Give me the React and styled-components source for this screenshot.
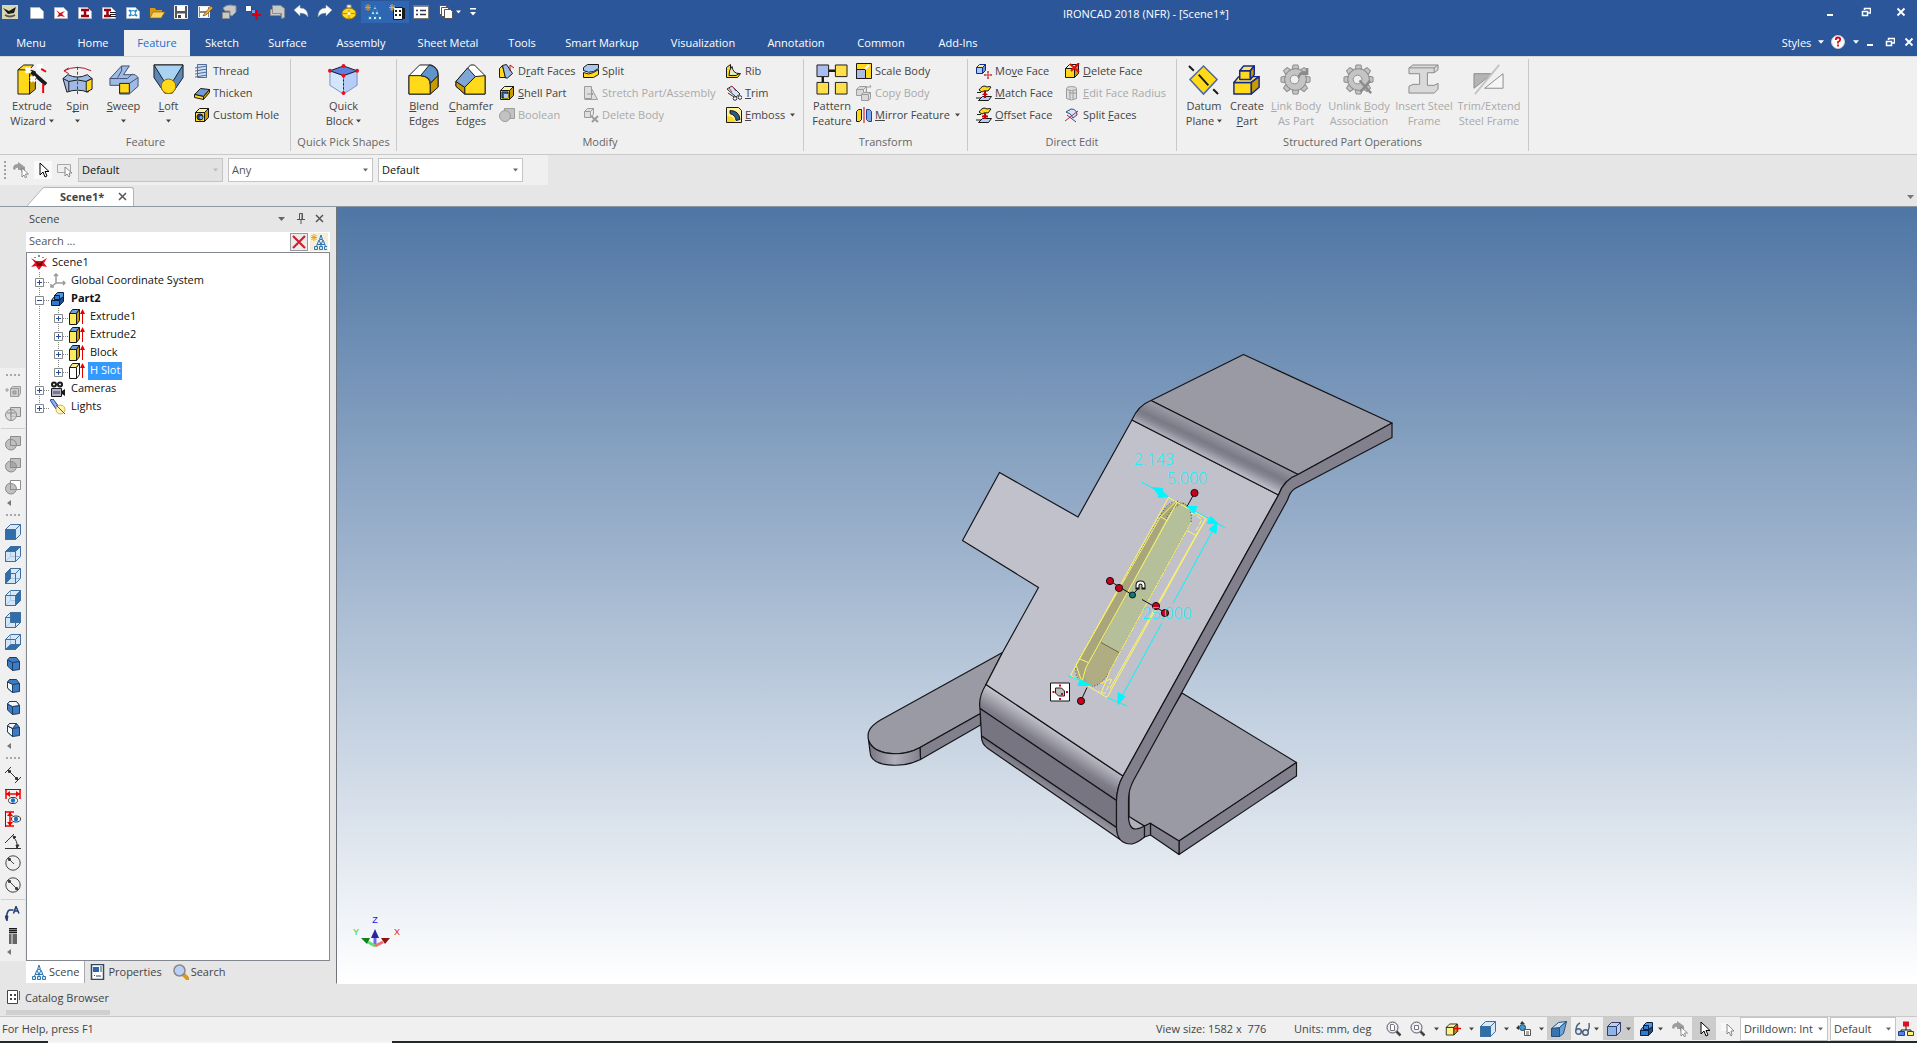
import React from 'react';
import styled, { createGlobalStyle, css, ThemeProvider } from 'styled-components';

const theme = {
	colorPrimary: '#2b579a',
	colorRibbon: '#f0f0f0',
	colorShell: '#e6e6e6',
	colorLine: '#c9c9c9',
	colorText: '#444444',
	colorMuted: '#a9a9a9',
	colorWhite: '#ffffff'
};

const GlobalStyle = createGlobalStyle`
	* {
		box-sizing: border-box;
	}
	body {
		margin: 0;
		font-family: "Open Sans", "Noto Sans", sans-serif;
		font-size: 11px;
		line-height: 15px;
		color: #444;
	}
	button, input, select {
		font: inherit;
		color: inherit;
		margin: 0;
		padding: 0;
		border: 0;
		background: none;
	}
	svg {
		display: block;
		flex: none;
	}
	u {
		text-decoration: underline 1px;
		text-decoration-skip-ink: none;
		text-underline-offset: 1px;
	}
`;

/* ---------- icons ---------- */

const K = '#1a1a1a';
const Y = '#ffd91a';
const YD = '#c89b00';
const YL = '#fff3a0';
const B = '#9fbbe4';
const BL = '#d5e4f8';
const BD = '#2f6ea8';
const GD = '#9c9c9c';

const Cube = ({ f = Y, t = YL, s = YD, k = K }) => (
	<g stroke={k} strokeLinejoin="round">
		<path d="M1.500 5.500h9v9h-9z" fill={f} />
		<path d="M1.500 5.500l4-4h9l-4 4z" fill={t} />
		<path d="M10.500 5.500l4-4v9l-4 4z" fill={s} />
	</g>
);

const faces = {
	front: 'M.5 5.5h10v10H.5z',
	back: 'M5.5 .5h10v10h-10z',
	top: 'M.5 5.5l5-5h10l-5 5z',
	bottom: 'M.5 15.5l5-5h10l-5 5z',
	left: 'M.5 5.5l5-5v10l-5 5z',
	right: 'M10.5 5.5l5-5v10l-5 5z'
};

const ViewCube = ({ face }) => (
	<g stroke="#3f6f9f" strokeLinejoin="round">
		<path d="M.5 5.5l5-5h10v10l-5 5h-10z" fill="#d9e8f7" />
		{face !== 'front' && <path d="M5.5 .5v10h10M5.5 10.5l-5 5" fill="none" stroke="#8fb0d4" />}
		<path d="M.5 5.5h10v10H.5zM10.5 5.5l5-5" fill="#cfe1f4" fillOpacity=".5" />
		<path d={faces[face]} fill={BD} />
	</g>
);

const IsoCube = ({ open }) => (
	<g stroke="#1d3c63" strokeLinejoin="round">
		<path d="M2.500 4l2-2.500h7l3 4v8l-7 1-5-4.500z" fill="#3d7cc4" />
		<path d="M2.500 4l5 2.500 7-1M7.500 6.500v8" fill="none" />
		{open === 1 && <path d="M2.500 4l5 2.500v8l-5-4.500z" fill="#f4f8fc" />}
		{open === 2 && <path d="M2.500 4l2-2.500h7l3 4-7 1z" fill="#f4f8fc" />}
		{open === 3 && <path d="M2.500 4l5 2.500v8l-5-4.500zM4.500 1.500h7l-4 5-5-2.500z" fill="#f4f8fc" />}
	</g>
);

const Gear = ({ children }) => (
	<g>
		<g stroke="#8b8b8b" fill="#c4c4c4">
			{[ 0, 45, 90, 135, 180, 225, 270, 315 ].map((a) => (
				<path key={a} d="M12.500 5l1-4h5l1 4z" transform={`rotate(${a} 16 16)`} />
			))}
			<circle cx="16" cy="16" r="11" />
		</g>
		<circle cx="16" cy="16" r="10.300" fill="#c4c4c4" />
		<circle cx="15" cy="16" r="4.500" fill="#f0f0f0" stroke="#8b8b8b" />
		{children}
	</g>
);

const Page = <path d="M1.500 3.500h9l4 4v7h-13z" fill="#fff" stroke="#aab4c4" />;
const CursorPath = 'M5 1v12l3-3 2 5 2-1-2-4.500h4z';

const Extrusion = ({ f, t, s }) => (
	<g>
		<g stroke={K} strokeLinejoin="round">
			<path d="M.5 4.500h7v11h-7z" fill={f} />
			<path d="M.5 4.500l3-4h7l-3 4z" fill={t} />
			<path d="M7.500 4.500l3-4v11l-3 4z" fill={s} />
		</g>
		<path d="M13.500 15V3" stroke="#e00000" />
		<path d="M11 5l2.500-5L16 5z" fill="#e00000" />
	</g>
);

const Assembly = ({ star }) => (
	<g transform={star ? 'translate(2 0)' : undefined}>
		<g fill="#cfe6f8" stroke="#2f78b4">
			<path d="M6.500 5.500L8 1l1.500 4.500zM4 10.500l2-4.500 2 4.500zM8 10.500L10 6l2 4.500z" />
			<path d="M4 11l-1 2M12 11l1 2M8 11v2" fill="none" />
			<path d="M1.500 12.500h3v3h-3zM6.500 12.500h3v3h-3zM11.500 12.500h3v3h-3z" />
		</g>
		{star && <path d="M1 0v7M-2 3.500h6M-1.500 1l5 5M3.500 1l-5 5" stroke="#e8a010" />}
	</g>
);

const Eye = ({ x, y }) => (
	<g>
		<ellipse cx={x} cy={y} rx="4.500" ry="3" fill="#fff" stroke="#333" />
		<circle cx={x} cy={y} r="2.200" fill="#1673d0" />
	</g>
);

const FaceStack = ({ offset }) => (
	<g stroke={K} strokeLinejoin="round">
		<path d="M2.500 15.500l4-4h9l-3 4z" fill="#b8cdf0" />
		<path d="M3 5q4-6 8-3 2-1 4 0l-3 4q-4-1-6 1z" fill={Y} />
		<path d="M1 7.500h4M0 13h5" />
		<path d={offset ? 'M9 6v6M6 9.500h6' : 'M9 6v7'} stroke="#c80010" strokeWidth="2" />
		<path d="M6 10l3-3 3 3z" fill="#c80010" stroke="none" />
	</g>
);

const icons = {
	app: (
		<g>
			<path d="M0 1h16v14H0z" fill="#d8d6b0" />
			<path d="M1 4l6 3 7-4-2 6-6 1z" fill={K} />
			<path d="M3 11q5 3 10 0" stroke="#555" strokeWidth="2" fill="none" />
		</g>
	),
	pageNew: Page,
	pageScene: <g>{Page}<path d="M3 6l4 3 5-2-3 3 3 3-4-1-4 1 2-3z" fill="#d01020" /></g>,
	pageI: <g>{Page}<path d="M4 6h8M4 12h8M8 6v6" stroke="#a00010" strokeWidth="2.500" /></g>,
	pageIList: <g>{Page}<path d="M3 6h7M3 12h7M6.500 6v6" stroke="#a00010" strokeWidth="2.500" /><path d="M9 8.500h6M9 10.500h6M9 12.500h6" stroke={K} /></g>,
	pageTarget: <g>{Page}<path d="M4 6l8 6M12 6l-8 6" stroke="#1c8ad0" strokeWidth="2" /><circle cx="8" cy="9" r="2.500" fill="#fff" stroke="#1c8ad0" /></g>,
	open: <g><path d="M1 4h5l1 2h6v8H1z" fill="#d79a18" /><path d="M1 14l3-6h12l-4 6z" fill="#ffd25c" stroke="#7a5a10" strokeWidth=".6" /></g>,
	save: <g><path d="M1.500 1.500h13v13h-13z" fill="#555" stroke="#eee" /><path d="M4 2h8v5H4zM4 9.500h8V14H4z" fill="#fff" /><path d="M5 11h3v3H5z" fill="#444" /></g>,
	saveAs: <g><path d="M1.500 2.500h11v11h-11z" fill="#888" stroke="#eee" /><path d="M3 3h8v4H3zM3 9h8v4H3z" fill="#fff" /><path d="M7 10l7-8 2 2-7 7-3 1z" fill="#f2a93b" stroke="#704000" strokeWidth=".6" /></g>,
	link: <g fill="#c9c9c9" stroke="#8c8c8c"><path d="M1.500 8.500h7v6h-7z" /><path d="M2 4q3-3 7-3l6 1v6l-4 4-2-1V7H4z" /></g>,
	moveBox: <g><path d="M.5 1.500h6v6h-6z" fill="#fff" stroke="#1b4bb0" /><path d="M6.500 5.500h4v4h-4z" fill="#6fa0e0" stroke="#1b4bb0" /><path d="M11.500 6v10M7 11h9" stroke="#d00010" strokeWidth="2" /></g>,
	print: <g fill="#c9c9c9" stroke="#8c8c8c"><path d="M1.500 5.500h10v6h-10z" /><path d="M3.500 1.500h8l4 3v9l-3 1v-5h-9z" /></g>,
	undo: <path d="M1 6l6-5v3q8 0 8 9-2-4-8-4v3z" fill="#fff" stroke="#9aa" strokeWidth=".5" />,
	redo: <path d="M15 6L9 1v3q-8 0-8 9 2-4 8-4v3z" fill="#fff" stroke="#9aa" strokeWidth=".5" />,
	target: <g><path d="M6 1h4v3H6z" fill="#fff" stroke="#997" /><ellipse cx="8" cy="9.500" rx="7" ry="5.500" fill={Y} stroke="#9a7a10" /><path d="M2 9.500h12M8 6v8" stroke="#c48a00" /><circle cx="8" cy="9.500" r="1.500" fill="#fff" /></g>,
	asmStar: <Assembly star />,
	asm: <Assembly />,
	catalogStar: <g><path d="M4.500 3.500h9v12h-9z" fill="#fff" stroke={K} /><path d="M6 6h2v2H6zM10 6h2v2h-2zM6 10h2v2H6zM10 10h2v2h-2z" fill={K} /><path d="M15 4v11" stroke={K} strokeWidth="2" /><path d="M3 0v7M0 3.500h6M1 1l4.500 5M5.500 1L1 6" stroke="#f0b020" /></g>,
	list: <g><path d="M.5 1.500h15v13H.5z" fill="#fff" stroke="#777" /><path d="M3 6.500h2M3 10.500h2M7 6.500h6M7 10.500h6" stroke="#334" strokeWidth="1.500" /><path d="M1 2.500h14" stroke="#889" /></g>,
	copies: <g fill="#fff" stroke="#555"><path d="M1.500 1.500h7v9h-7z" /><path d="M3.500 3.500h7v9h-7z" /><path d="M6.500 5.500h6l2 2v7h-8z" /></g>,
	help: <g><circle cx="8" cy="8" r="6.500" fill="#fff" stroke="#ccc" /><path d="M5.800 6q0-2.500 2.200-2.500t2.200 2q0 1.500-2.200 2.500v1.500M8 10.500v2" fill="none" stroke="#e00010" strokeWidth="1.800" /></g>,
	thread: <g><path d="M3.500 1.500h9v13h-9z" fill="#cfe0f6" stroke="#4f6a94" /><path d="M1 5l12-2M1 8l12-2M1 11l12-2M1 14l12-2" stroke="#4f6a94" /></g>,
	thicken: <g stroke={K} strokeLinejoin="round"><path d="M.5 9.500l6-6 9 1-6 7z" fill="#6f9ad4" /><path d="M.5 9.500l9 2v3l-9-2z" fill={Y} /><path d="M9.500 11.500l6-7v3l-6 7z" fill={YD} /></g>,
	hole: <g><Cube /><circle cx="6" cy="10" r="3" fill="#1f3f74" stroke={K} /><circle cx="7" cy="10.500" r="1.500" fill="#7fb0e8" /></g>,
	draft: <g stroke={K} strokeLinejoin="round"><path d="M.5 5.500l3-3 3 12h-6z" fill={Y} /><path d="M3.500 2.500l4-1 6 9-5 4.500h-2z" fill="#9fbbe4" /><path d="M11 8V2l4 3" fill="none" stroke="#c01010" /></g>,
	shell: <g><Cube /><path d="M3 7h6v6H3z" fill="#2b6ca8" stroke={K} /><path d="M5 9h4v4H5z" fill="#a8d0f4" /></g>,
	boolean: <g fill="#c2c2c2" stroke={GD}><path d="M5.500 1.500h10v10h-10z" /><circle cx="6" cy="9" r="5.500" /></g>,
	split: <g stroke={K} strokeLinejoin="round"><path d="M.5 9.500q5 3 10 0l5-3v5l-5 3h-10z" fill={Y} /><path d="M.5 4.500l4-3h11v4l-5 3q-5 2-10-1z" fill="#a9c8f0" /></g>,
	stretch: <g fill="#dedede" stroke={GD}><path d="M1.500 1.500h7v12h-7zM8.500 3.500l6 11h-13" /><path d="M4 9h6M8 7l2 2-2 2" fill="none" /></g>,
	deleteBody: <g fill="#dedede" stroke={GD}><path d="M1.500 4.500h6v6h-6zM1.500 4.500l3-3h6l-3 3M10.500 1.500v6l-3 3" /><path d="M8 9l7 6M15 9l-6 6" strokeWidth="2" /></g>,
	rib: <g stroke={K} strokeLinejoin="round"><path d="M.5 4.500l4-3v7q2 3 10 2l-3 4H.5z" fill={Y} /><path d="M3 12.500q0-6 3-9 1 7 7 7l-3 2z" fill="#e3edc0" /></g>,
	trim: <g stroke="#333" strokeLinejoin="round"><path d="M1 4l5-3 8 8-4 3z" fill={BL} /><path d="M3 3l3 4M6 1l4 5" stroke="#d03040" /><circle cx="9" cy="13.500" r="1.800" fill="#fff" /><circle cx="14" cy="12.500" r="1.800" fill="#fff" /><path d="M2 8l6 4" /></g>,
	emboss: <g><path d="M.5 .5h12l3 3v12H.5z" fill={YL} stroke={K} /><path d="M1 15V9q7 0 8 6z" fill={Y} /><path d="M4 3.500q9 0 10 9l-4 1q0-5-6-7z" fill="#2e5a86" stroke={K} /></g>,
	scale: <g><path d="M.5 .5h15v15H.5z" fill={Y} stroke={K} /><path d="M.5 6.500h9v9h-9z" fill="#aebbe8" stroke={K} /><path d="M9 6l4-4" stroke="#fff" strokeWidth="2" /></g>,
	copyBody: <g fill="#d8d8d8" stroke={GD}><path d="M.5 4.500l3-3h7l-3 3zM.5 4.500h7v6h-7zM7.500 10.500l3-3v-6" /><path d="M5.500 9.500l2-2h7l-2 2zM5.500 9.500h7v6h-7zM12.500 15.500l2-2v-6" /><path d="M11 2h4l-1-2" fill="none" /></g>,
	mirror: <g><path d="M.5 4.500l2-2h3v10l-2 2h-3z" fill={Y} stroke={K} /><path d="M15.500 4.500l-2-2h-3v10l2 2h3z" fill="#7fa8ec" stroke="#1b3f9a" /><path d="M8 0v16" stroke="#d00000" /></g>,
	moveFace: <g><path d="M.5 4.500h6v6h-6z" fill="#a9c8f4" stroke="#0d2c8c" /><path d="M.5 4.500l3-3h6l-3 3z" fill={YL} stroke="#0d2c8c" /><path d="M6.500 4.500l3-3v6l-3 3z" fill="#6b93d8" stroke="#0d2c8c" /><path d="M12 8v8M8 12h8M11 9h2M11 15h2M9 11v2M15 11v2" stroke="#c03030" /></g>,
	matchFace: <FaceStack />,
	offsetFace: <FaceStack offset />,
	deleteFace: <g><Cube /><path d="M6 1l9 8M15 0L7 8" stroke="#e01010" strokeWidth="2" /></g>,
	editRadius: <g fill="#dcdcdc" stroke={GD}><path d="M2.500 3.500v10q5 3 10 0v-10" /><ellipse cx="7.500" cy="3.500" rx="5" ry="2" /><path d="M5 8h8M6 6v8M9 6v8" /></g>,
	splitFaces: <g><path d="M2 5l5-3q6 0 6 6l-4 3q-2-5-7-6z" fill={BL} stroke="#334a80" /><path d="M1 14L14 4" stroke="#d02030" /><path d="M3 8l9 7" stroke="#334a80" /></g>,
	grayArrow: <g><path d="M0 7q0-5 5-5V0l7 5v6H9l-1-3H5V6Q3 5 2 8z" fill="#9d9d9d" /><path d="M9 6v9l2-2 1.500 3 1-1-1-3h3z" fill="#fff" stroke="#666" strokeWidth=".7" /></g>,
	cursor: <path d={CursorPath} fill="#fff" stroke="#000" />,
	cursorBox: <g><path d="M.5 2.500h13v8H.5z" fill="#eee" stroke="#a8a8a8" /><path d="M8 5v9l2-2 2 3 1-1-1-3h3z" fill="#fff" stroke="#888" /></g>,
	cursorGhost: <g><path d="M1 2h8v8H1z" fill="#f8f8f8" /><path d="M7 3v10l2-2 2 4 1-1-1-4h3z" fill="#fff" stroke="#888" /></g>,
	cubeGray: <g stroke={GD} fill="#cdcdcd"><path d="M5.500 4.500h8v8h-8zM5.500 4.500l2-2h8v7l-2 3" /><path d="M0 6h4M2 4v4" /><path d="M8 7h3v3H8z" fill="#aaa" /></g>,
	boolWire: <g stroke="#8c8c8c" fill="#d2d2d2"><path d="M5.500 1.500h10v9h-10z" /><circle cx="6" cy="9" r="5.500" fillOpacity=".7" /><path d="M2 7h8M6 3v12" fill="none" /></g>,
	boolA: <g stroke="#8c8c8c" fill="#c0c0c0"><circle cx="6" cy="9.500" r="5.500" /><path d="M5.500 1.500h10v9h-10z" /><path d="M5.500 4.500q6 0 6 6" fill="none" /></g>,
	boolB: <g stroke="#8c8c8c" fill="#c0c0c0"><circle cx="6" cy="9.500" r="5.500" /><path d="M5.500 1.500h10v9h-10z" /><path d="M5.500 4.500q6 0 6 6h-6z" fill="#a8a8a8" /></g>,
	boolC: <g stroke="#8c8c8c" fill="#c0c0c0"><circle cx="6" cy="9.500" r="5.500" /><path d="M5.500 1.500h10v9h-10z" fill="#fff" /><path d="M5.500 4.500q6 0 6 6h-6z" /></g>,
	vFront: <ViewCube face="front" />,
	vTop: <ViewCube face="top" />,
	vLeft: <ViewCube face="left" />,
	vRight: <ViewCube face="right" />,
	vBack: <ViewCube face="back" />,
	vBottom: <ViewCube face="bottom" />,
	iso0: <IsoCube open={0} />,
	iso1: <IsoCube open={1} />,
	iso2: <IsoCube open={2} />,
	iso3: <IsoCube open={3} />,
	dimLinear: <g stroke="#333" fill="none"><path d="M0 6l6-6M10 16l6-6M3 3l10 10" /><path d="M3 3l3 1-2 2zM13 13l-3-1 2-2z" fill="#333" /></g>,
	dimH: <g><path d="M1 1v9M15 1v9M1 5h14" stroke="#e00" strokeWidth="1.500" /><path d="M1 5l4-3v6zM15 5l-4-3v6z" fill="#e00" /><path d="M0 .5h16" stroke="#333" /><Eye x={8} y={11.5} /></g>,
	dimV: <g><path d="M0 1h9M0 15h9M5 1v14" stroke="#e00" strokeWidth="1.500" /><path d="M5 1L2 5h6zM5 15l-3-4h6z" fill="#e00" /><path d="M.5 0v16" stroke="#333" /><Eye x={11} y={8} /></g>,
	dimAngle: <g stroke="#333" fill="none"><path d="M0 15.500h16M0 10L9 1M8 4q5 4 4 11" /><path d="M8 3l3 1-2 2zM11 12h3l-2 3z" fill="#333" /></g>,
	dimRadius: <g stroke="#444" fill="none"><circle cx="8" cy="8" r="7.200" /><path d="M9 9L3.500 3.500" /><path d="M3 3l3 1-2 2z" fill="#333" /></g>,
	dimDiameter: <g stroke="#444" fill="none"><circle cx="8" cy="8" r="7.200" /><path d="M3 3l10 10" /><path d="M3 3l3 1-2 2zM13 13l-3-1 2-2z" fill="#333" /></g>,
	leader: <g stroke="#1f3f74" fill="none"><path d="M1.500 14q0-9 3-10h4" strokeWidth="1.500" /><path d="M0 10h3l-1 5z" fill="#1f3f74" /><path d="M8.500 7.500l2.500-7 3 7M9.500 5h4" strokeWidth="1.500" /></g>,
	bolt: <g><path d="M4 6h8v10H4z" fill="#666" /><path d="M6 6h2v10H6z" fill="#aaa" /><path d="M4 .5h8M4 2.500h8M4 4.500h8" stroke={K} strokeWidth="1.500" /></g>,
	props: <g><path d="M1.500 .5h12v15h-12z" fill="#fff" stroke="#33475e" strokeWidth="1.500" /><path d="M3 3h6v5H3z" fill="#2b66a8" /><path d="M10 3h2M10 5h2M10 7h2M4 11l1 1M6 12h5" stroke="#33475e" /></g>,
	searchTab: <g><path d="M10 10l5 5" stroke="#d99a1c" strokeWidth="4" strokeLinecap="round" /><circle cx="6.500" cy="6.500" r="5.500" fill="#b9d1f6" stroke="#888" strokeWidth="1.500" /></g>,
	catalog: <g><path d="M1.500 1.500h10v13h-10z" fill="#fff" stroke="#444" /><path d="M4 5h2v2H4zM8 5h2v2H8zM4 9h2v2H4zM8 9h2v2H8z" fill="#444" /><path d="M13.500 2v9" stroke="#666" /></g>,
	zoomFit: <g><circle cx="6.500" cy="6.500" r="5.500" fill="#eef" stroke="#555" /><path d="M4.500 3.500h3l1 1v5h-4z" fill="#fff" stroke="#777" /><path d="M10.500 10.500l4 4" stroke="#444" strokeWidth="2.500" /></g>,
	zoomWin: <g><circle cx="6.500" cy="6.500" r="5.500" fill="#eef" stroke="#555" /><path d="M4.500 4.500h4v4h-4z" fill="#fff" stroke="#777" /><path d="M10.500 10.500l4 4" stroke="#444" strokeWidth="2.500" /></g>,
	cubeRed: <g><g transform="scale(.85) translate(0 2)"><Cube f="#fff08a" /></g><path d="M12.500 4v7M9 7.500h7" stroke="#e00" strokeWidth="1.500" /></g>,
	cubeBlue: <ViewCube face="front" />,
	orbit: <g><path d="M6 0l3 3H4zM0 7l3-3v5z" fill="#333" /><circle cx="6.500" cy="6.500" r="3" fill="#3a9bd8" stroke="#245" /><path d="M8.500 8.500h6v6h-6z" fill="#fff" stroke="#555" /><path d="M10 11h3M10 13h3" stroke="#555" /></g>,
	persp: <g stroke="#24507c" strokeLinejoin="round"><path d="M.5 7.500l8-1v9h-8z" fill="#3873b0" /><path d="M.5 7.500l7-6 8-1-7 6z" fill="#cfe3f5" /><path d="M8.500 6.500l7-6-3 12-4 3z" fill="#6da3d6" /></g>,
	glasses: <g stroke="#4a6076" fill="#dce8f4" strokeWidth="1.400"><circle cx="3.500" cy="10.500" r="2.800" /><circle cx="10.500" cy="11.500" r="2.800" /><path d="M1 9q0-5 4-7M13 10q2-4 1-8M6 10l2 1" fill="none" /></g>,
	shade: <Cube f="#8fb4e6" t="#b9d2f3" s="#b9d2f3" k="#333d66" />,
	part: <g stroke="#0c1f3c" strokeLinejoin="round"><path d="M1.500 9.500h8v5h-8z" fill="#2f7bd0" /><path d="M9.500 9.500l4-4v5l-4 4z" fill="#1a4f94" /><path d="M1.500 9.500l2-3h8l-2 3z" fill="#6db0f0" /><path d="M4.500 4.500h5v4h-5z" fill="#2f7bd0" /><path d="M4.500 4.500l3-3h6v4l-4 3v-4z" fill="#4f97e4" /></g>,
	hierarchy: <g><path d="M8 5v4M3 11V9h10v2" stroke={K} fill="none" /><path d="M5 .5h6v5H5z" fill="#e01020" /><path d="M.5 10.500h6v4h-6z" fill="#4f84e8" stroke="#1b3f9a" /><path d="M9.500 10.500h6v4h-6z" fill="#fff27a" stroke="#1b3f9a" /></g>,
	scene: <g><path d="M0 3l5 3h6l5-3-3 5 3 4-5-1-3 4-3-4-5 1 4-4z" fill="#e81020" /><path d="M5 6l3 2 4-2-1 5H6z" fill="#8a0008" /><path d="M8 0v2M4 2v1M12 2v1" stroke={K} /></g>,
	axes: <g stroke="#9a9a9a" fill="none" strokeWidth="1.500"><path d="M6 10V1M6 10h9M6 10l-5 4M4 3l2-2 2 2M13 8l2 2-2 2M1 11v3h3" /></g>,
	extrude: <Extrusion f="#ffe95c" t="#6fa0dc" s={YD} />,
	slot: <Extrusion f="#fff" t="#fff08a" s="#fff" />,
	camera: <g><circle cx="4" cy="3.500" r="3" fill={K} /><circle cx="10" cy="3.500" r="3" fill={K} /><circle cx="4" cy="3.500" r="1" fill="#fff" /><circle cx="10" cy="3.500" r="1" fill="#fff" /><path d="M1.500 7.500h10v8h-10z" fill="#b4b4c8" stroke={K} /><path d="M3 10h7v3H3z" fill="#77778c" /><path d="M12 10l3-2v7l-3-2z" fill={K} /></g>,
	light: <g><path d="M0 1l3-1 6 8-3 2z" fill="#8fb2e8" stroke="#1b3f9a" /><circle cx="10.500" cy="10.500" r="4.500" fill="#fff3b0" stroke="#c8b060" /><path d="M6 6l9 9" stroke="#d02020" /></g>,
	clear: <path d="M2 2l12 12M14 2L2 14" stroke="#d02030" strokeWidth="2.200" />,

	extrudeWizard: <g><path d="M2 6l6-5h10l-4 5v25H2z" fill={Y} stroke={K} /><path d="M14 6l6 2v18l-6 5z" fill={YD} stroke={K} /><path d="M2 6h12" stroke={K} /><path d="M16 8l15 13" stroke={K} strokeWidth="4" /><path d="M10 4l5 5M15 4l-5 5M15 13l5 5M20 13l-5 5M22 0l5 5M27 0l-5 5" stroke="#fff" strokeWidth="3" /><path d="M28 30V20M26 5l5 3" stroke="#e00" strokeWidth="2" /></g>,
	spin: <g><path d="M2 7q14-7 28 0M2 7l5-3M2 7l5 3" fill="none" stroke="#b01020" /><path d="M1 15l5-4q10 5 20 0l5 4-4 14q-11-4-22 0z" fill={B} stroke={K} /><path d="M1 15l6 3q9-3 18 0l6-3M7 18v10" fill="none" stroke={K} /><path d="M25 18l6-3v11l-6 3z" fill={Y} stroke={K} /><path d="M16 3v28" stroke="#b01020" strokeDasharray="3 2" /></g>,
	sweep: <g stroke="#3c4f74" strokeLinejoin="round"><path d="M2 15L14 2h8l-6 9h12l3 3v9l-9 8H12v-9H2z" fill={B} /><path d="M2 15h10l8 0 5-5M22 20l9-6M14 2v5l-4 7" fill="none" /><path d="M12 20h10v10H12z" fill={Y} stroke={K} /></g>,
	loft: <g stroke={K} strokeLinejoin="round"><path d="M1 1h30v13L20 30h-8L1 14z" fill="#5d87ba" /><path d="M1 1h30l-10 16H11z" fill="#a8d4f2" /><circle cx="16" cy="23" r="7.500" fill={Y} stroke="#8a6a00" /></g>,
	quick: <g><path d="M2 7l14 5v19L2 22z" fill="#d3e6fc" stroke="#6f8fd0" /><path d="M30 7l-14 5v19l14-9z" fill="#b6cdf6" stroke="#6f8fd0" /><path d="M2 7l14-5 14 5-14 5z" fill="#5d7fe0" stroke={K} /><path d="M16 12v19" stroke={K} strokeDasharray="2 2" /><g fill="#e8101c"><circle cx="2" cy="7" r="2" /><circle cx="30" cy="7" r="2" /><circle cx="16" cy="2" r="2" /><circle cx="16" cy="12" r="2" /><circle cx="16" cy="30" r="2" /></g></g>,
	blend: <g stroke={K} strokeLinejoin="round"><path d="M1 12L12 1h12q7 3 7 9v13l-8 8H1z" fill="#fff" /><path d="M1 12h12q10 1 10 10v9H1z" fill={Y} /><path d="M13 12L22 1q9 2 9 11l-8 8q0-7-10-8z" fill="#5f95cc" /><path d="M23 20l8-8v12l-8 7z" fill={YD} /></g>,
	chamfer: <g stroke={K} strokeLinejoin="round"><path d="M1 18L16 1h4l11 11v19H10L1 23z" fill="#fff" /><path d="M10 24l11-11 10-1v19H10z" fill={Y} /><path d="M1 18l9 6v7l-9-8z" fill={YD} /><path d="M1 18L13 4l8 9-11 11z" fill="#7ea6d6" /></g>,
	pattern: <g stroke={K}><path d="M7 13v6M13 7h7" strokeWidth="2.500" /><path d="M1 1h12v12H1z" fill="#a9bdf0" /><path d="M20 1h12v12H20zM1 19h12v12H1zM20 19h12v12H20z" fill="#ffe04a" /></g>,
	datum: <g><path d="M16 2l14 14-14 15L2 16z" fill={Y} stroke="#4a68a8" strokeWidth="1.500" /><path d="M1 2l5 5M11 11l10 11M26 26l5 5" stroke={K} strokeWidth="2" /></g>,
	createPart: <g stroke="#14288c" strokeLinejoin="round" strokeWidth="1.500"><path d="M3 19h18v12H3z" fill={Y} /><path d="M3 19l5-6h21l-8 6z" fill="#ffe65a" /><path d="M21 19l8-6v11l-8 7z" fill={YD} /><path d="M9 7h11v9H9z" fill={Y} /><path d="M9 7l4-5h11l-4 5z" fill="#ffe65a" /><path d="M20 7l4-5v9l-4 5z" fill={YD} /></g>,
	linkBody: <Gear><path d="M19 14q2-7 9-5M28 4v6h-6" fill="none" stroke="#8b8b8b" strokeWidth="2.500" /></Gear>,
	unlinkBody: <Gear><path d="M17 17l12 13M28 17L18 29" stroke="#8b8b8b" strokeWidth="2.500" /></Gear>,
	steel: <g fill="#d9d9d9" stroke="#888" strokeLinejoin="round"><path d="M1 4l4-3h26v5l-4 3H20v13h7l4-2v6l-4 4H1v-7l4-2h7V10H1z" /><path d="M1 4h26l4-3M27 4v5" fill="none" /></g>,
	trimSteel: <g stroke="#8a8a8a"><path d="M1 10h19L1 25z" fill="#b4b4b4" /><path d="M31 10v15H12z" fill="#f6f6f6" /><path d="M2 31L27 1" stroke="#c4c4c4" strokeWidth="2" /></g>
};

const Icon = ({ name, size = 16, box = size }) => (
	<svg width={size} height={size} viewBox={`0 0 ${box} ${box}`} fill="none" aria-hidden="true">
		{icons[name]}
	</svg>
);

const Caret = ({ color = '#444', size = 7 }) => (
	<svg width={size} height="4" viewBox="0 0 7 4" aria-hidden="true">
		<path d="M0 0h7L3.500 4z" fill={color} />
	</svg>
);

const WinGlyph = ({ kind }) => (
	<svg width="10" height="10" viewBox="0 0 10 10" fill="none" stroke="currentColor" strokeWidth="2">
		{kind === 'Minimize' && <path d="M2 8h6" />}
		{kind === 'Restore' && <path d="M3.500 3V1.500h6v4.500H7M1.500 4.500h5v4h-5z" strokeWidth="1.500" />}
		{kind === 'Close' && <path d="M1.500 1.500l7 7M8.500 1.500l-7 7" strokeWidth="1.800" />}
	</svg>
);

/* underscore marks the access key */
const Label = ({ text }) => {
	const at = text.indexOf('_');
	if (at < 0) return text;
	return (
		<React.Fragment>
			{text.slice(0, at)}
			<u>{text[at + 1]}</u>
			{text.slice(at + 2)}
		</React.Fragment>
	);
};

/* ---------- header ---------- */

const Shell = styled.div`
	display: flex;
	flex-direction: column;
	min-height: 100vh;
	background-color: ${(props) => props.theme.colorShell};
`;

const TitleBar = styled.header`
	display: flex;
	align-items: center;
	height: 30px;
	padding-bottom: 6px;
	background-color: ${(props) => props.theme.colorPrimary};
	color: ${(props) => props.theme.colorWhite};
`;

const QuickButton = styled.button`
	display: flex;
	align-items: center;
	justify-content: center;
	gap: 2px;
	width: ${(props) => props.$width || 24}px;
	height: 22px;
	background-color: ${(props) => (props.$on ? '#2f66b4' : 'transparent')};
`;

const Title = styled.h1`
	flex: 1;
	margin: 0;
	padding-top: 2px;
	font-size: 11px;
	font-weight: 400;
	text-align: center;
`;

const WindowButton = styled.button`
	display: flex;
	align-items: center;
	justify-content: center;
	width: ${(props) => props.$width}px;
	height: 24px;
`;

const TabBar = styled.nav`
	display: flex;
	height: 26px;
	background-color: ${(props) => props.theme.colorPrimary};
	color: ${(props) => props.theme.colorWhite};
`;

const Tab = styled.button`
	width: ${(props) => props.$width}px;
	height: 26px;
	padding-bottom: 1px;
	${(props) =>
		props.$active &&
		css`
			background-color: ${props.theme.colorRibbon};
			color: #1a6fd0;
		`};
`;

const TabTools = styled.div`
	display: flex;
	align-items: center;
	margin-left: auto;
	padding-bottom: 2px;
`;

const ToolButton = styled.button`
	display: flex;
	align-items: center;
	justify-content: center;
	gap: 7px;
	width: ${(props) => props.$width}px;
	height: 24px;
`;

const quickTools = [
	[ 'New', 'pageNew' ],
	[ 'New Scene', 'pageScene' ],
	[ 'New Drawing', 'pageI' ],
	[ 'Drawing Templates', 'pageIList' ],
	[ 'Import', 'pageTarget' ],
	[ 'Open', 'open' ],
	[ 'Save', 'save' ],
	[ 'Save As', 'saveAs' ],
	[ 'Link', 'link' ],
	[ 'Insert', 'moveBox' ],
	[ 'Print', 'print' ],
	[ 'Undo', 'undo' ],
	[ 'Redo', 'redo' ],
	[ 'TriBall', 'target' ],
	[ 'Scene Browser', 'asmStar', true ],
	[ 'Catalogs', 'catalogStar', true ],
	[ 'Properties', 'list' ]
];

const tabs = [
	[ 'Menu', 62 ],
	[ 'Home', 62 ],
	[ 'Feature', 66 ],
	[ 'Sketch', 64 ],
	[ 'Surface', 67 ],
	[ 'Assembly', 80 ],
	[ 'Sheet Metal', 94 ],
	[ 'Tools', 54 ],
	[ 'Smart Markup', 106 ],
	[ 'Visualization', 96 ],
	[ 'Annotation', 90 ],
	[ 'Common', 80 ],
	[ 'Add-Ins', 74 ]
];

const Header = () => (
	<React.Fragment>
		<TitleBar>
			<QuickButton $width={20} aria-label="Application">
				<Icon name="app" />
			</QuickButton>
			<QuickButton $width={5} as="span" />
			{quickTools.map(([ label, icon, on ]) => (
				<QuickButton key={label} aria-label={label} $on={on}>
					<Icon name={icon} />
				</QuickButton>
			))}
			<QuickButton $width={32} aria-label="Windows">
				<Icon name="copies" />
				<Caret size={5} color="#fff" />
			</QuickButton>
			<QuickButton $width={16} aria-label="Customize">
				<svg width="6" height="8" viewBox="0 0 6 8">
					<path d="M0 0h6v1.500H0zM0 4h6L3 7.500z" fill="#fff" />
				</svg>
			</QuickButton>
			<Title>IRONCAD 2018 (NFR) - [Scene1*]</Title>
			<WindowButton $width={37} aria-label="Minimize window">
				<WinGlyph kind="Minimize" />
			</WindowButton>
			<WindowButton $width={36} aria-label="Restore window">
				<WinGlyph kind="Restore" />
			</WindowButton>
			<WindowButton $width={33} aria-label="Close window">
				<WinGlyph kind="Close" />
			</WindowButton>
		</TitleBar>
		<TabBar>
			{tabs.map(([ name, width ]) => (
				<Tab key={name} $width={width} $active={name === 'Feature'}>
					{name}
				</Tab>
			))}
			<TabTools>
				<ToolButton $width={50}>
					Styles <Caret color="#fff" size={6} />
				</ToolButton>
				<ToolButton $width={32} aria-label="Help">
					<Icon name="help" />
					<Caret color="#fff" size={6} />
				</ToolButton>
				<WindowButton $width={20} aria-label="Minimize scene">
					<WinGlyph kind="Minimize" />
				</WindowButton>
				<WindowButton $width={20} aria-label="Restore scene">
					<WinGlyph kind="Restore" />
				</WindowButton>
				<WindowButton $width={17} aria-label="Close scene">
					<WinGlyph kind="Close" />
				</WindowButton>
			</TabTools>
		</TabBar>
	</React.Fragment>
);

/* ---------- ribbon ---------- */

const RibbonBar = styled.section`
	display: flex;
	height: 99px;
	border-top: 1px solid #d8d8d8;
	border-bottom: 1px solid ${(props) => props.theme.colorLine};
	background-color: ${(props) => props.theme.colorRibbon};
	padding: 2px 0 3px 1px;
`;

const Group = styled.div`
	display: flex;
	flex-direction: column;
	justify-content: space-between;
	width: ${(props) => props.$width}px;
	border-right: 1px solid ${(props) => props.theme.colorLine};
`;

const GroupBody = styled.div`
	display: flex;
	justify-content: ${(props) => (props.$center ? 'center' : 'flex-start')};
	padding: 1px 0 0 ${(props) => props.$pad || 0}px;
`;

const GroupName = styled.div`
	padding-bottom: 2px;
	color: #666;
	text-align: center;
`;

const BigButton = styled.button`
	display: flex;
	flex-direction: column;
	align-items: center;
	width: ${(props) => props.$width}px;
	padding-top: 4px;
	color: ${(props) => props.theme.colorText};
	white-space: nowrap;
	&:disabled {
		color: ${(props) => props.theme.colorMuted};
	}
`;

const BigLabel = styled.span`
	display: flex;
	align-items: center;
	justify-content: center;
	gap: 3px;
	height: 15px;
	&:first-of-type {
		margin-top: 2px;
	}
`;

const Stack = styled.div`
	width: ${(props) => props.$width}px;
	padding-left: ${(props) => props.$pad || 0}px;
`;

const SmallButton = styled.button`
	display: flex;
	align-items: center;
	gap: 3px;
	height: 22px;
	white-space: nowrap;
	color: ${(props) => props.theme.colorText};
	&:disabled {
		color: ${(props) => props.theme.colorMuted};
	}
	span {
		padding-bottom: 1px;
	}
	span + svg {
		margin-left: 2px;
	}
`;

const groups = [
	{
		name: 'Feature',
		width: 290,
		pad: 7,
		items: [
			{ w: 48, icon: 'extrudeWizard', lines: [ 'Extrude', 'Wizard' ], menu: true },
			{ w: 43, icon: 'spin', lines: [ 'S_pin', '' ], menu: true },
			{ w: 49, icon: 'sweep', lines: [ '_Sweep', '' ], menu: true },
			{ w: 41, icon: 'loft', lines: [ '_Loft', '' ], menu: true },
			{ w: 95, pad: 5, stack: [ [ 'thread', 'Thread' ], [ 'thicken', 'Thicken' ], [ 'hole', 'Custom Hole' ] ] }
		]
	},
	{
		name: 'Quick Pick Shapes',
		width: 106,
		center: true,
		items: [ { w: 60, icon: 'quick', lines: [ 'Quick', 'Block' ], menu: true } ]
	},
	{
		name: 'Modify',
		width: 407,
		pad: 3,
		items: [
			{ w: 48, icon: 'blend', lines: [ '_Blend', 'Edges' ] },
			{ w: 46, icon: 'chamfer', lines: [ '_Chamfer', 'Edges' ] },
			{ w: 89, pad: 5, stack: [ [ 'draft', 'D_raft Faces' ], [ 'shell', '_Shell Part' ], [ 'boolean', 'Boolean', true ] ] },
			{ w: 143, stack: [ [ 'split', 'Split' ], [ 'stretch', 'Stretch Part/Assembly', true ], [ 'deleteBody', 'Delete Body', true ] ] },
			{ w: 74, stack: [ [ 'rib', 'Rib' ], [ 'trim', '_Trim' ], [ 'emboss', '_Emboss', false, true ] ] }
		]
	},
	{
		name: 'Transform',
		width: 164,
		pad: 4,
		items: [
			{ w: 48, icon: 'pattern', lines: [ 'Pattern', 'Feature' ] },
			{ w: 110, stack: [ [ 'scale', 'Scale Body' ], [ 'copyBody', 'Copy Body', true ], [ 'mirror', '_Mirror Feature', false, true ] ] }
		]
	},
	{
		name: 'Direct Edit',
		width: 209,
		pad: 8,
		items: [
			{ w: 88, stack: [ [ 'moveFace', 'Mo_ve Face' ], [ 'matchFace', '_Match Face' ], [ 'offsetFace', '_Offset Face' ] ] },
			{ w: 110, stack: [ [ 'deleteFace', '_Delete Face' ], [ 'editRadius', '_Edit Face Radius', true ], [ 'splitFaces', 'Split _Faces' ] ] }
		]
	},
	{
		name: 'Structured Part Operations',
		width: 352,
		pad: 3,
		items: [
			{ w: 48, icon: 'datum', lines: [ 'Datum', 'Plane' ], menu: true },
			{ w: 38, icon: 'createPart', lines: [ 'Create', '_Part' ] },
			{ w: 60, icon: 'linkBody', lines: [ '_Link Body', 'As Part' ], off: true },
			{ w: 66, icon: 'unlinkBody', lines: [ 'Unlink _Body', 'Association' ], off: true },
			{ w: 64, icon: 'steel', lines: [ 'Insert Steel', 'Frame' ], off: true },
			{ w: 66, icon: 'trimSteel', lines: [ 'Trim/Extend', 'Steel Frame' ], off: true }
		]
	}
];

const RibbonItem = ({ item }) =>
	item.stack ? (
		<Stack $width={item.w} $pad={item.pad}>
			{item.stack.map(([ icon, text, off, menu ]) => (
				<SmallButton key={text} disabled={off}>
					<Icon name={icon} />
					<span>
						<Label text={text} />
					</span>
					{menu && <Caret size={5} />}
				</SmallButton>
			))}
		</Stack>
	) : (
		<BigButton $width={item.w} disabled={item.off}>
			<Icon name={item.icon} size={32} box={33} />
			<BigLabel>
				<span>
					<Label text={item.lines[0]} />
				</span>
			</BigLabel>
			<BigLabel>
				{item.lines[1] && (
					<span>
						<Label text={item.lines[1]} />
					</span>
				)}
				{item.menu && <Caret size={5} />}
			</BigLabel>
		</BigButton>
	);

const Ribbon = () => (
	<RibbonBar>
		{groups.map((group) => (
			<Group key={group.name} $width={group.width}>
				<GroupBody $pad={group.pad} $center={group.center}>
					{group.items.map((item, i) => <RibbonItem key={i} item={item} />)}
				</GroupBody>
				<GroupName>{group.name}</GroupName>
			</Group>
		))}
	</RibbonBar>
);

/* ---------- selection bar and document tabs ---------- */

const SelectionBar = styled.div`
	display: flex;
	align-items: center;
	align-self: flex-start;
	height: 30px;
	padding: 0 25px 1px 4px;
	background-color: ${(props) => props.theme.colorRibbon};
`;

const Grip = styled.span`
	width: 4px;
	height: 18px;
	border-left: 2px dotted #a0a0a0;
	margin-right: 4px;
`;

const PickButton = styled.button`
	display: flex;
	align-items: center;
	justify-content: center;
	width: ${(props) => props.$width || 18}px;
	height: 18px;
	margin-right: 4px;
	background-color: ${(props) => (props.$on ? '#fafafa' : 'transparent')};
`;

const SelectBox = styled.span`
	display: grid;
	align-items: center;
	width: ${(props) => props.$width}px;
	height: 24px;
	margin-right: ${(props) => props.$gap}px;
	border: 1px solid #c4c4c4;
	background-color: ${(props) => (props.$off ? '#e2e2e2' : '#fff')};
	select {
		grid-area: 1 / 1;
		width: 100%;
		height: 100%;
		padding: 0 ${(props) => props.$inner || 20}px 0 3px;
		appearance: none;
		color: ${(props) => props.$ink || '#111'};
		opacity: 1;
	}
	svg {
		grid-area: 1 / 1;
		justify-self: end;
		margin-right: 4px;
		pointer-events: none;
	}
`;

const Select = ({ label, value, width, gap, off, ink, inner }) => (
	<SelectBox $width={width} $gap={gap} $off={off} $ink={ink} $inner={inner}>
		<select aria-label={label} defaultValue={value} disabled={off}>
			<option>{value}</option>
		</select>
		<Caret size={5} color={off ? '#bbb' : '#666'} />
	</SelectBox>
);

const DocBar = styled.div`
	display: flex;
	align-items: flex-end;
	height: 22px;
	padding-left: 27px;
	border-bottom: 1px solid #8f979f;
`;

const DocTab = styled.div`
	display: flex;
	align-items: center;
	width: 89px;
	height: 19px;
	padding: 0 0 2px 15px;
	gap: 14px;
	background-color: ${(props) => props.theme.colorWhite};
	border: 1px solid #b4b4b4;
	border-width: 1px 1px 0 0;
	border-radius: 0 3px 0 0;
	font-weight: 700;
`;

const DocMenu = styled.button`
	margin: 0 0 5px auto;
	padding: 2px;
`;

const Cross = () => (
	<svg width="9" height="9" viewBox="0 0 9 9" stroke="#555" strokeWidth="1.500">
		<path d="M1 1l7 7M8 1L1 8" />
	</svg>
);

/* ---------- left tool strip ---------- */

const Main = styled.main`
	display: grid;
	grid-template-columns: 26px 304px 6px minmax(0, 1fr);
	flex: 1;
`;

const StripColumn = styled.aside`
	display: flex;
	flex-direction: column;
	justify-content: flex-end;
	padding-bottom: 23px;
`;

const Strip = styled.div`
	display: flex;
	flex-direction: column;
	align-items: center;
	width: 25px;
	padding: 0 0 4px 1px;
	background-color: ${(props) => props.theme.colorRibbon};
`;

const StripGrip = styled.span`
	display: flex;
	align-items: center;
	height: 13px;
	&::before {
		content: '';
		width: 14px;
		border-top: 2px dotted #a8a8a8;
	}
`;

const StripLine = styled.span`
	width: 24px;
	height: 7px;
	padding-top: 3px;
	&::before {
		content: '';
		display: block;
		border-top: 1px solid #d0d0d0;
	}
`;

const StripButton = styled.button`
	display: flex;
	align-items: center;
	justify-content: center;
	width: 24px;
	height: ${(props) => props.$height || 22}px;
`;

const stripItems = [
	'grip', 'cubeGray', 'boolWire', 'line', 'boolA', 'boolB', 'boolC', 'more',
	'grip', 'vFront', 'vTop', 'vLeft', 'vRight', 'vBack', 'vBottom', 'iso0', 'iso1', 'iso2', 'iso3', 'more',
	'grip', 'dimLinear', 'dimH', 'dimV', 'dimAngle', 'dimRadius', 'dimDiameter', 'line', 'leader', 'bolt', 'more'
];

const ToolStrip = () => (
	<StripColumn>
		<Strip>
			{stripItems.map((name, i) => {
				if (name === 'grip') return <StripGrip key={i} />;
				if (name === 'line') return <StripLine key={i} />;
				if (name === 'more')
					return (
						<StripButton key={i} $height={10} aria-label="More buttons">
							<svg width="12" height="6" viewBox="0 0 12 6">
								<path d="M0 3l4-3v6z" fill="#777" />
							</svg>
						</StripButton>
					);
				return (
					<StripButton key={i} aria-label={name}>
						<Icon name={name} />
					</StripButton>
				);
			})}
		</Strip>
	</StripColumn>
);

/* ---------- scene panel ---------- */

const Panel = styled.aside`
	display: flex;
	flex-direction: column;
`;

const PanelTitle = styled.div`
	display: flex;
	align-items: center;
	height: 25px;
	padding: 0 1px 2px 3px;
	h2 {
		flex: 1;
		margin: 0;
		font-size: 11px;
		font-weight: 400;
	}
	button {
		display: flex;
		align-items: center;
		justify-content: center;
		width: 19px;
		height: 18px;
	}
`;

const SearchRow = styled.div`
	display: flex;
	align-items: center;
	height: 20px;
	padding-right: 2px;
	background-color: ${(props) => props.theme.colorWhite};
	input {
		flex: 1;
		min-width: 0;
		height: 20px;
		padding: 0 0 4px 3px;
		outline: 0;
	}
	input::placeholder {
		color: #555;
		opacity: 1;
	}
	button {
		display: flex;
		align-items: center;
		justify-content: center;
		width: 18px;
		height: 18px;
		margin-left: 2px;
		background-color: #f4eeda;
	}
	button:first-of-type {
		border: 1px solid #999;
		background-color: #ececec;
	}
`;

const Tree = styled.ul`
	flex: 1;
	margin: 0;
	padding: 1px 0 0 4px;
	list-style: none;
	border: 1px solid #828790;
	background-color: ${(props) => props.theme.colorWhite};
`;

const Node = styled.li`
	display: flex;
	align-items: center;
	height: 18px;
	color: #111;
	font-weight: ${(props) => (props.$bold ? 700 : 400)};
	button {
		display: block;
	}
`;

const NodeName = styled.span`
	margin-left: 3px;
	padding: 0 2px 3px;
	color: ${(props) => (props.$selected ? '#fff' : 'inherit')};
	background-color: ${(props) => (props.$selected ? '#3399ff' : 'transparent')};
`;

const nodes = [
	{ name: 'Scene1', icon: 'scene', level: 0 },
	{ name: 'Global Coordinate System', icon: 'axes', level: 1 },
	{ name: 'Part2', icon: 'part', level: 1, open: true, bold: true },
	{ name: 'Extrude1', icon: 'extrude', level: 2 },
	{ name: 'Extrude2', icon: 'extrude', level: 2 },
	{ name: 'Block', icon: 'extrude', level: 2 },
	{ name: 'H Slot', icon: 'slot', level: 2, last: true, selected: true },
	{ name: 'Cameras', icon: 'camera', level: 1 },
	{ name: 'Lights', icon: 'light', level: 1, last: true }
];

const Guide = () => (
	<svg width="19" height="18" viewBox="0 0 19 18" stroke="#888" strokeDasharray="1 1">
		<path d="M8.500 0v18" />
	</svg>
);

const Twisty = ({ open, last }) => (
	<svg width="19" height="18" viewBox="0 0 19 18" stroke="#888" fill="#fff">
		<path d={last ? 'M8.500 0v10M9 10.500h9' : 'M8.500 0v18M9 10.500h9'} strokeDasharray="1 1" fill="none" />
		<path d="M4.500 6.500h8v8h-8z" />
		<path d={open ? 'M6 10.500h5' : 'M6 10.500h5M8.500 8v5'} stroke="#2b4b9a" />
	</svg>
);

const PanelTabs = styled.div`
	display: flex;
	align-items: center;
	height: 23px;
	padding-bottom: 1px;
`;

const PanelTab = styled.button`
	display: flex;
	align-items: center;
	gap: 2px;
	height: 22px;
	padding: 0 5px 1px;
	background-color: ${(props) => (props.$active ? '#fff' : 'transparent')};
	border-right: 1px solid ${(props) => (props.$active ? '#aaa' : 'transparent')};
`;

const ScenePanel = () => (
	<Panel>
		<PanelTitle>
			<h2>Scene</h2>
			<button aria-label="Panel menu">
				<Caret size={9} color="#666" />
			</button>
			<button aria-label="Pin">
				<svg width="8" height="11" viewBox="0 0 8 11" fill="none" stroke="#555">
					<path d="M2.500 6V.5h3V6M0 6.500h8M4 7v4M5 1v5" />
				</svg>
			</button>
			<button aria-label="Close panel">
				<Cross />
			</button>
		</PanelTitle>
		<SearchRow>
			<input aria-label="Search the scene" placeholder="Search ..." />
			<button aria-label="Clear search">
				<Icon name="clear" />
			</button>
			<button aria-label="Scene tree options">
				<Icon name="asmStar" />
			</button>
		</SearchRow>
		<Tree>
			{nodes.map((node) => (
				<Node key={node.name} $bold={node.bold}>
					{node.level === 2 && <Guide />}
					{node.level > 0 && (
						<button aria-label={`Expand ${node.name}`}>
							<Twisty open={node.open} last={node.last} />
						</button>
					)}
					<Icon name={node.icon} />
					<NodeName $selected={node.selected}>{node.name}</NodeName>
				</Node>
			))}
		</Tree>
		<PanelTabs>
			<PanelTab $active>
				<Icon name="asm" />
				Scene
			</PanelTab>
			<PanelTab>
				<Icon name="props" />
				Properties
			</PanelTab>
			<PanelTab>
				<Icon name="searchTab" />
				Search
			</PanelTab>
		</PanelTabs>
	</Panel>
);

/* ---------- 3D view ---------- */

const Viewport = styled.section`
	position: relative;
	min-width: 0;
	border-left: 1px solid #70757c;
	border-bottom: 1px solid #fff;
	background: linear-gradient(#4f76a4, #ffffff);
	overflow: hidden;
`;

const Model = styled.svg`
	width: 100%;
	height: 0;
	min-height: 100%;
`;

const Triad = styled.svg`
	position: absolute;
	left: 14px;
	bottom: 32px;
`;

const Handle = ({ x, y, r = 3.6, fill = '#c8001e' }) => <circle cx={x} cy={y} r={r} fill={fill} stroke="#111" />;

const Scene = () => (
	<Viewport>
		<Model viewBox="337 208 1580 775" role="img" aria-label="Bent bracket with a slot">
			<defs>
				<linearGradient id="topBend" gradientUnits="userSpaceOnUse" x1="1218" y1="435" x2="1206" y2="460">
					<stop offset="0" stopColor="#9a9aa4" />
					<stop offset=".45" stopColor="#7a7a87" />
					<stop offset=".6" stopColor="#858592" />
					<stop offset="1" stopColor="#c1c1cb" />
				</linearGradient>
				<linearGradient id="lowBend" gradientUnits="userSpaceOnUse" x1="1055" y1="731" x2="1041" y2="753">
					<stop offset="0" stopColor="#c1c1cb" />
					<stop offset=".7" stopColor="#7e7d89" />
					<stop offset="1" stopColor="#74737f" />
				</linearGradient>
				<linearGradient id="underBend" gradientUnits="userSpaceOnUse" x1="1050" y1="781" x2="1042" y2="794">
					<stop offset="0" stopColor="#74737f" />
					<stop offset="1" stopColor="#a3a3ae" />
				</linearGradient>
				<linearGradient id="armEnd" x1="0" x2="1">
					<stop offset="0" stopColor="#74737f" />
					<stop offset=".5" stopColor="#b0b0ba" />
					<stop offset="1" stopColor="#82808c" />
				</linearGradient>
			</defs>
			<g stroke="#151518" strokeWidth="1.200" strokeLinejoin="round">
				<path d="M1128 816L1144.500 826.500L1140 834H1128z" fill="#b0b0ba" />
				<path d="M1182 693.500L1296.500 763L1179 841.500L1150.500 824L1144.500 826.500L1129 817V780z" fill="#9a9aa4" />
				<path d="M1296.500 763V776.500L1179 855V841.500z" fill="#82808c" />
				<path d="M1150.500 824L1179 841.500V855L1150.500 835.500z" fill="#82808c" />

				<path d="M1002.500 653L880.500 720.500C868 728 867 734 868.600 741C874 756 902 758 920 748L980.500 714L986 685z" fill="#9a9aa4" />
				<path d="M920 748L980.500 714V725.500L920.500 760z" fill="#82808c" />
				<path d="M868.600 741C874 756 902 758 920 748L920.500 760C902 769 870 768 870 752z" fill="url(#armEnd)" />

				<path d="M986 685L1123 776.500Q1117 787 1116.500 801L980 709Q978 698 986 685z" fill="url(#lowBend)" />
				<path d="M980 709L1116.500 801V828L981.500 736.500z" fill="#767581" />
				<path d="M981.500 736.500L1116.500 828L1120 840L988 749Q981 744 981.500 736.500z" fill="url(#underBend)" />

				<path
					d="M1132 420.500L1278.500 495.500L1123 776.500L986 685L1002.500 653L1038.500 588L962.500 541L999.500 473L1078 517.500z"
					fill="#c1c1cb"
				/>
				<path d="M1243.500 355L1392 423.500L1298 475L1151 401z" fill="#9a9aa4" />
				<path d="M1151 401L1298 475Q1284 480 1278.500 495.500L1132 420.500Q1138 406 1151 401z" fill="url(#topBend)" />
				<path
					d="M1392 423.500V438L1295 489Q1290 492 1287.500 500.500L1134 780Q1128.500 790 1128.500 800V817Q1129 830 1136 829.500Q1140 829 1144.500 826.500V837.500Q1138 843 1132 844.500Q1117 845 1116.500 828V801Q1117 787 1123 776.500L1278.500 495.500Q1284 480 1298 475z"
					fill="#82808c"
				/>
				<path d="M1144.500 826.500L1150.500 823.500V835.500L1144.500 837.500z" fill="#82808c" />
			</g>

			<path d="M1160 517Q1168 500 1184 503Q1193 509 1191 523L1119 653L1110 671Q1098 692 1086 684Q1075 680 1076 665z" fill="#a9a57c" />
			<path d="M1166 520Q1172 506 1184 504Q1193 510 1191 523L1119 653L1101 643z" fill="#b5c09a" />
			<path d="M1101 643L1119 653L1110 671Q1102 686 1092 687Q1083 684 1086 668z" fill="#b0ad82" />
			<path d="M1101 643L1119 653" stroke="#6d6a45" />
			<g fill="none" stroke="#333" strokeDasharray="1 2">
				<path d="M1160 517L1076 665Q1074 682 1086 684M1160 517Q1168 500 1180 502M1166 520Q1172 506 1184 504Q1193 510 1191 523L1110 671Q1102 686 1092 687" />
			</g>
			<g fill="none" stroke="#fff763">
				<path d="M1168.500 498L1206 519L1107 698L1070.500 676z" />
				<path d="M1176 502L1160 518L1076 665L1082 683M1177 503L1086 668L1082 682" />
				<path d="M1191 523L1110 671L1101 694M1160 517L1167 521M1079 659L1088 663M1187 531L1196 536L1206 519M1196 536L1110 689" />
				<path d="M1191 513L1202 520L1196 531M1100 684L1112 679L1105 694L1098 692" strokeDasharray="5 2" />
			</g>

			<g stroke="#00f6ff" fill="#00f6ff">
				<path d="M1141.500 482.500L1168 497M1187 507L1225.500 528.500M1216.500 524L1173 604M1161.500 624L1118 704M1107 698L1127 706.500M1068 676L1091 686" fill="none" />
				<path d="M1168 497l-10 1 4-7zM1153 488l10 1-4 7zM1187 507l10 0-3 7zM1218 524l-11 0 4-7zM1217 523l-8 7 7 4zM1118 705l0-12 7 4zM1091 686l-11-6-2 6z" />
			</g>
			<path d="M1194.500 493.500L1187 507M1110 581.500L1132.500 595.500L1139 588M1142 600L1165 613M1081 701L1087 688" stroke="#111" fill="none" />
			<Handle x={1194.5} y={493.5} />
			<Handle x={1110} y={581.5} />
			<Handle x={1119} y={588.5} />
			<Handle x={1156} y={606.5} />
			<Handle x={1165} y={613.5} />
			<Handle x={1081} y={701.5} />
			<Handle x={1132.5} y={595.5} r={3} fill="#0c7c80" />
			<g fill="#00f6ff" fontFamily="Open Sans" fontWeight="300" fontSize="16" textAnchor="middle">
				<text x="1154" y="465">2.143</text>
				<text x="1187" y="484">5.000</text>
				<text x="1167" y="619">25.000</text>
			</g>
			<path d="M1137.500 590v-4q0-3 3-3t3 3v4" stroke="#111" strokeWidth="4" fill="none" />
			<path d="M1137.500 588v-2q0-3 3-3t3 3v2" stroke="#fff" strokeWidth="2" fill="none" />

			<path d="M1050.500 683.500h19v18h-19z" fill="#fff" stroke="#111" />
			<path d="M1055.500 688.500h6l3 3v5h-6l-3-3z" fill="#bbb" stroke="#222" />
			<path d="M1059 686h2M1059 699.500h2M1052.500 692.500h2M1066 692.500h2M1061 694.500h2" stroke="#d00010" strokeWidth="2" />
		</Model>
		<Triad width="52" height="40" viewBox="0 0 52 40" fontFamily="Liberation Sans" fontSize="9" textAnchor="middle">
			<path d="M24 35V22" stroke="#6b6bf0" strokeWidth="3" />
			<path d="M24 18l4 9h-8z" fill="#28289c" />
			<path d="M24 35l-7-4" stroke="#5fe070" strokeWidth="3" />
			<path d="M10 27l9 0-3 6z" fill="#0f8020" />
			<path d="M24 35l8-4" stroke="#f07070" strokeWidth="3" />
			<path d="M39 27l-9 0 4 6z" fill="#901018" />
			<text x="24" y="12" fill="#1010f0">Z</text>
			<text x="5" y="24" fill="#10e020">Y</text>
			<text x="46" y="24" fill="#f01010">X</text>
		</Triad>
	</Viewport>
);

/* ---------- footer ---------- */

const CatalogRow = styled.div`
	display: flex;
	height: 32px;
	padding-left: 6px;
`;

const CatalogTab = styled.button`
	display: flex;
	align-items: center;
	gap: 3px;
	width: 104px;
	height: 31px;
	border-bottom: 5px solid #d0d0d0;
	white-space: nowrap;
`;

const StatusBar = styled.footer`
	display: flex;
	align-items: center;
	height: 25px;
	padding: 0 3px 1px 2px;
	border-top: 1px solid ${(props) => props.theme.colorLine};
	background-color: ${(props) => props.theme.colorRibbon};
`;

const StatusText = styled.span`
	width: ${(props) => props.$width}px;
	padding-bottom: 1px;
	white-space: pre;
`;

const Spring = styled.span`flex: 1;`;

const StatusButton = styled.button`
	display: flex;
	align-items: center;
	justify-content: center;
	gap: ${(props) => props.$gap || 0}px;
	width: ${(props) => props.$width}px;
	height: 23px;
	background-color: ${(props) => (props.$on ? '#cccccc' : 'transparent')};
`;

const statusTools = [
	{ icon: 'zoomFit', w: 24 },
	{ icon: 'zoomWin', w: 36, menu: true, gap: 8 },
	{ icon: 'cubeRed', w: 34, menu: true, gap: 8 },
	{ icon: 'cubeBlue', w: 36, menu: true, gap: 8 },
	{ icon: 'orbit', w: 35, menu: true, gap: 7 },
	{ icon: 'persp', w: 24, on: true },
	{ icon: 'glasses', w: 32, menu: true, gap: 3 },
	{ icon: 'shade', w: 31, menu: true, gap: 4, on: true },
	{ icon: 'part', w: 34, menu: true, gap: 3 },
	{ icon: 'grayArrow', w: 24 },
	{ icon: 'cursor', w: 24, on: true },
	{ icon: 'cursorGhost', w: 24 }
];

const TaskStrip = styled.div`
	display: flex;
	height: 2px;
	padding-left: 48px;
	background-color: #20282c;
	&::before {
		content: '';
		width: 344px;
		background-color: #f4f4f4;
	}
`;

const Footer = () => (
	<React.Fragment>
		<CatalogRow>
			<CatalogTab>
				<Icon name="catalog" />
				Catalog Browser
			</CatalogTab>
		</CatalogRow>
		<StatusBar>
			<StatusText>For Help, press F1</StatusText>
			<Spring />
			<StatusText $width={138}>{'View size: 1582 x  776'}</StatusText>
			<StatusText $width={88}>Units: mm, deg</StatusText>
			{statusTools.map((tool) => (
				<StatusButton key={tool.icon} aria-label={tool.icon} $width={tool.w} $gap={tool.gap} $on={tool.on}>
					<Icon name={tool.icon} />
					{tool.menu && <Caret size={5} />}
				</StatusButton>
			))}
			<Select label="Drilldown" value="Drilldown: Int" width={88} gap={2} ink="#444" inner={12} />
			<Select label="Configuration" value="Default" width={66} gap={2} ink="#444" inner={14} />
			<Icon name="hierarchy" />
		</StatusBar>
		<TaskStrip />
	</React.Fragment>
);

const App = () => (
	<ThemeProvider theme={theme}>
		<GlobalStyle />
		<Shell>
			<Header />
			<Ribbon />
			<SelectionBar>
				<Grip />
				<PickButton aria-label="Pick filter">
					<Icon name="grayArrow" />
				</PickButton>
				<PickButton $on aria-label="Select">
					<Icon name="cursor" />
				</PickButton>
				<PickButton $width={18} aria-label="Box select">
					<Icon name="cursorBox" />
				</PickButton>
				<Select label="Selection set" value="Default" width={145} gap={5} off />
				<Select label="Selection filter" value="Any" width={145} gap={5} ink="#555" />
				<Select label="Style" value="Default" width={145} gap={0} />
			</SelectionBar>
			<DocBar>
				<svg width="18" height="19" viewBox="0 0 18 19">
					<path d="M0 19L15 2Q16 .5 18 .5V19z" fill="#fff" />
					<path d="M0 19L15 2Q16 .5 18 .5" fill="none" stroke="#b4b4b4" />
				</svg>
				<DocTab>
					Scene1*
					<button aria-label="Close Scene1">
						<Cross />
					</button>
				</DocTab>
				<DocMenu aria-label="Open documents">
					<Caret size={9} color="#777" />
				</DocMenu>
			</DocBar>
			<Main>
				<ToolStrip />
				<ScenePanel />
				<span />
				<Scene />
			</Main>
			<Footer />
		</Shell>
	</ThemeProvider>
);

export default App;
